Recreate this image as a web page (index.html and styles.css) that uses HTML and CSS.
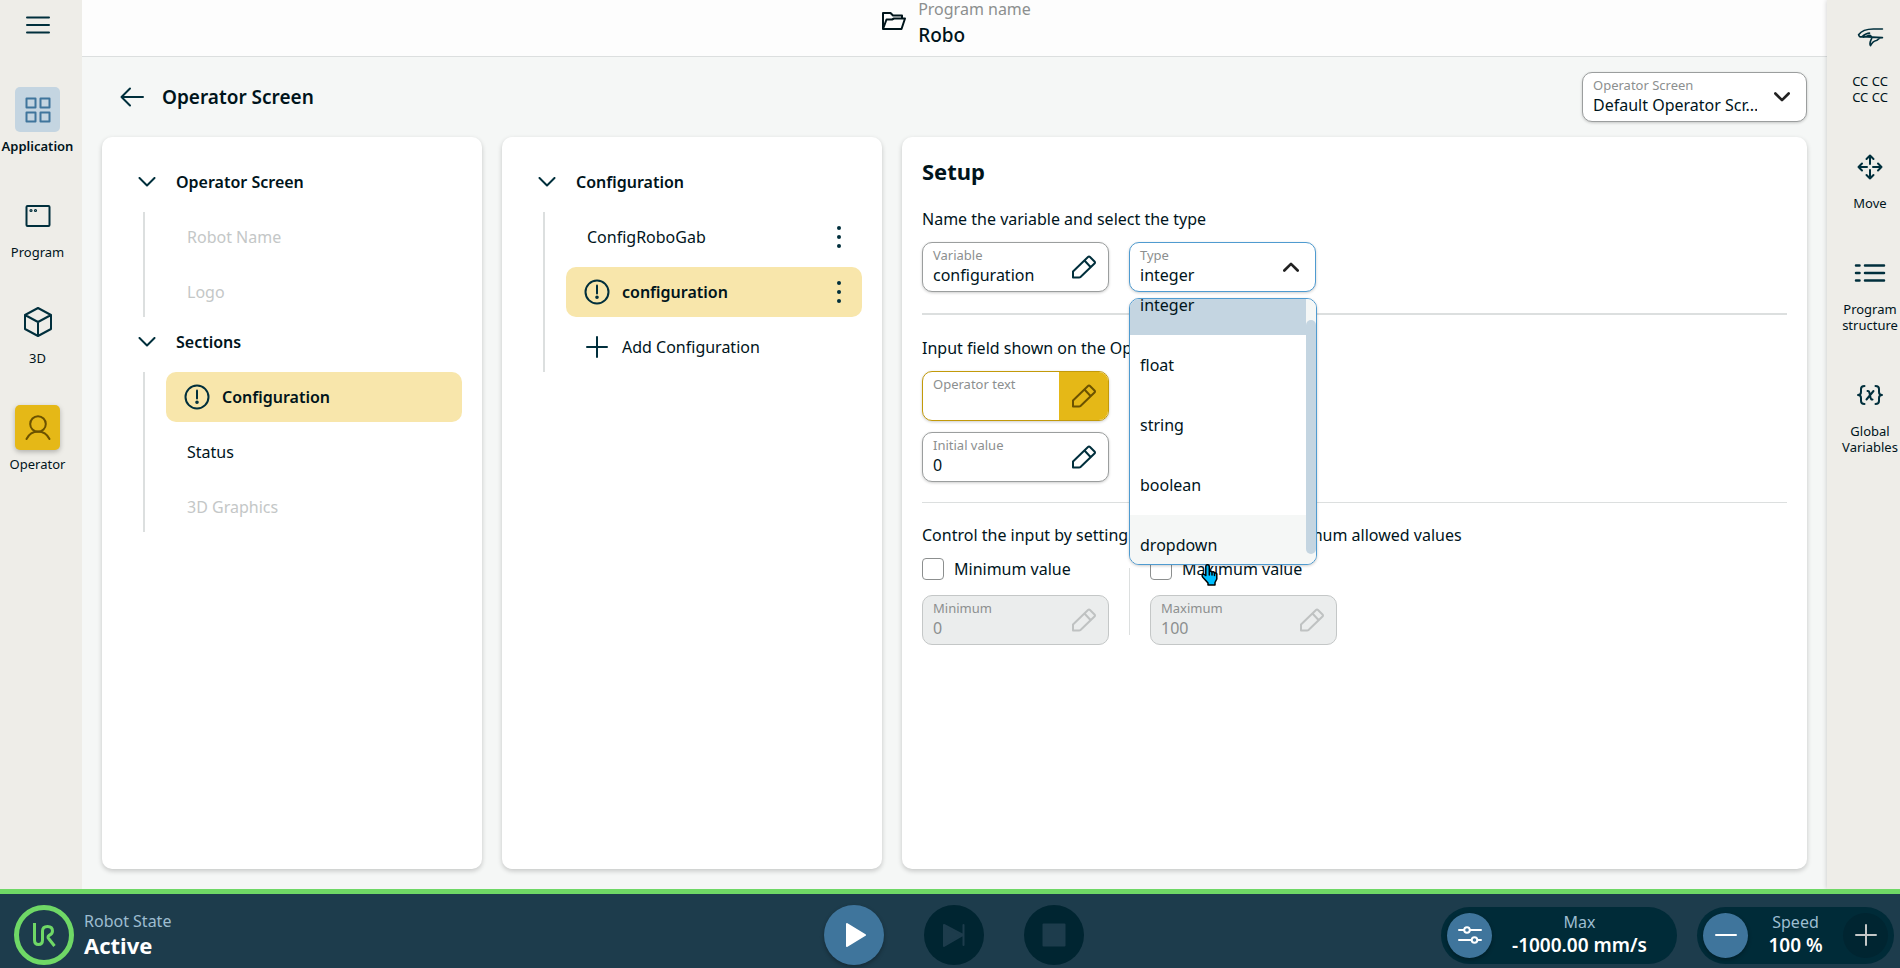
FILE: index.html
```html
<!DOCTYPE html>
<html lang="en">
<head>
  <meta charset="utf-8">
  <title>Operator Screen</title>
  <link rel="stylesheet" href="styles.css">
</head>
<body>
  <!-- shared icons -->
  <svg class="sprite" width="0" height="0">
    <symbol id="pencil" viewBox="0 0 24 24">
      <path d="M1 22.5V16.5L16 2Q17 1 18 2L22.5 6.500Q23.500 7.500 22.500 8.500L8.500 22Q8 22.500 7 22.500ZM12.500 5.500L18.500 12"/>
    </symbol>
    <symbol id="chevron" viewBox="0 0 18 10">
      <path d="M1.500 1L9 8.500L16.500 1"/>
    </symbol>
    <symbol id="alert" viewBox="0 0 26 26">
      <circle cx="13" cy="13" r="11.500"/>
      <path d="M13 6.500V14.500"/>
      <circle cx="13" cy="18.300" r="0.800" fill="currentColor"/>
    </symbol>
    <symbol id="kebab" viewBox="0 0 6 24">
      <g fill="currentColor" stroke="none">
        <circle cx="3" cy="3" r="2"/>
        <circle cx="3" cy="12" r="2"/>
        <circle cx="3" cy="21" r="2"/>
      </g>
    </symbol>
  </svg>

  <div class="screen">
    <nav class="side side-left">
      <button class="menu-btn" aria-label="Menu">
        <svg width="24" height="20" viewBox="0 0 24 20"><path d="M1 2.500H23M1 10H23M1 17.500H23"/></svg>
      </button>
      <a class="side-item active" href="#">
        <span class="side-icon box-blue">
          <svg width="26" height="26" viewBox="0 0 26 26"><path d="M1.500 1.500H10.500V10.500H1.500ZM15.500 1.500H24.500V10.500H15.500ZM1.500 15.500H10.500V24.500H1.500ZM15.500 15.500H24.500V24.500H15.500Z"/></svg>
        </span>
        Application
      </a>
      <a class="side-item" href="#">
        <span class="side-icon">
          <svg width="26" height="24" viewBox="0 0 26 24">
            <rect x="1.500" y="2" width="23" height="20" rx="1"/>
            <circle cx="6" cy="6.500" r="0.600"/>
            <circle cx="10.500" cy="6.500" r="0.600"/>
          </svg>
        </span>
        Program
      </a>
      <a class="side-item" href="#">
        <span class="side-icon">
          <svg width="28" height="30" viewBox="0 0 28 30"><path d="M14 1L27 8V22L14 29L1 22V8ZM1 8L14 15L27 8M14 15V29"/></svg>
        </span>
        3D
      </a>
      <a class="side-item" href="#">
        <span class="side-icon box-yellow">
          <svg width="26" height="26" viewBox="0 0 26 26"><circle cx="13" cy="9" r="7.800"/><path d="M1.500 24C4 19 8 16.500 13 16.500S22 19 24.500 24"/></svg>
        </span>
        Operator
      </a>
    </nav>

    <div class="center">
      <header class="top">
        <svg width="24" height="18" viewBox="0 0 24 18"><path d="M1 17V1H8.500L11 3.500H20V6.500M1 17L4.500 7.500H10L12 6.500H23L19.500 17Z"/></svg>
        <div>
          <p class="top-label">Program name</p>
          <p class="top-name">Robo</p>
        </div>
      </header>

      <div class="title-row">
        <button class="back" aria-label="Back">
          <svg width="24" height="20" viewBox="0 0 24 20"><path d="M23 10H1.500M10 1.500L1.500 10L10 18.500"/></svg>
        </button>
        <h1>Operator Screen</h1>
        <div class="field screen-select">
          <label for="screen">Operator Screen</label>
          <select id="screen">
            <option>Default Operator Scr...</option>
          </select>
          <span class="field-arrow"><svg width="16" height="10"><use href="#chevron"/></svg></span>
        </div>
      </div>

      <main class="panels">
        <section class="panel tree">
          <h2><svg width="18" height="10"><use href="#chevron"/></svg>Operator Screen</h2>
          <ul>
            <li class="row disabled">Robot Name</li>
            <li class="row disabled">Logo</li>
          </ul>
          <h2><svg width="18" height="10"><use href="#chevron"/></svg>Sections</h2>
          <ul>
            <li class="row selected"><svg width="26" height="26"><use href="#alert"/></svg>Configuration</li>
            <li class="row">Status</li>
            <li class="row disabled">3D Graphics</li>
          </ul>
        </section>

        <section class="panel tree">
          <h2><svg width="18" height="10"><use href="#chevron"/></svg>Configuration</h2>
          <ul>
            <li class="row">ConfigRoboGab
              <button class="more" aria-label="More"><svg width="6" height="24"><use href="#kebab"/></svg></button>
            </li>
            <li class="row selected"><svg width="26" height="26"><use href="#alert"/></svg>configuration
              <button class="more" aria-label="More"><svg width="6" height="24"><use href="#kebab"/></svg></button>
            </li>
            <li class="row"><svg width="26" height="26" viewBox="0 0 26 26"><path d="M13 3V23M3 13H23"/></svg>Add Configuration</li>
          </ul>
        </section>

        <section class="panel setup">
          <h2>Setup</h2>
          <p>Name the variable and select the type</p>
          <div class="fields">
            <div class="field">
              <label for="variable">Variable</label>
              <input id="variable" type="text" value="configuration">
              <button class="edit" aria-label="Edit variable"><svg width="24" height="24"><use href="#pencil"/></svg></button>
            </div>
            <div class="dropdown">
              <div class="field open">
                <label for="type">Type</label>
                <select id="type">
                  <option>integer</option>
                </select>
                <span class="field-arrow up"><svg width="16" height="10"><use href="#chevron"/></svg></span>
              </div>
              <div class="list">
                <ul id="options" role="listbox">
                  <li class="current" role="option">integer</li>
                  <li role="option">float</li>
                  <li role="option">string</li>
                  <li role="option">boolean</li>
                  <li class="hover" role="option">dropdown</li>
                </ul>
                <span class="track"><span class="thumb"></span></span>
              </div>
              <svg class="pointer" width="18" height="22" viewBox="0 0 18 22">
                <path d="M6.500 0.800C8 0.800 8.300 1.800 8.300 3V7.500Q9.800 6.500 11 8Q12.600 7.200 13.500 8.800Q15 8.300 15.800 9.800V15L14 18.500V21H7V19L2 13.500Q0.500 11.500 1.500 10.500T4.800 11.500V3C4.800 1.800 5 0.800 6.500 0.800ZM8.300 7.500V11M11 8V11M13.500 8.800V11.500"/>
              </svg>
            </div>
          </div>

          <hr class="thick">
          <p>Input field shown on the Operator Screen</p>
          <div class="field warn">
            <label for="optext">Operator text</label>
            <input id="optext" type="text">
            <button class="edit" aria-label="Edit operator text"><svg width="24" height="24"><use href="#pencil"/></svg></button>
          </div>
          <div class="field second">
            <label for="initial">Initial value</label>
            <input id="initial" type="text" value="0">
            <button class="edit" aria-label="Edit initial value"><svg width="24" height="24"><use href="#pencil"/></svg></button>
          </div>

          <hr>
          <p>Control the input by setting the minimum and maximum allowed values</p>
          <div class="fields">
            <div>
              <label class="check"><input type="checkbox">Minimum value</label>
              <div class="field off">
                <label for="min">Minimum</label>
                <input id="min" type="text" value="0" disabled>
                <button class="edit" aria-label="Edit minimum" disabled><svg width="24" height="24"><use href="#pencil"/></svg></button>
              </div>
            </div>
            <div class="split"></div>
            <div>
              <label class="check"><input type="checkbox">Maximum value</label>
              <div class="field off">
                <label for="max">Maximum</label>
                <input id="max" type="text" value="100" disabled>
                <button class="edit" aria-label="Edit maximum" disabled><svg width="24" height="24"><use href="#pencil"/></svg></button>
              </div>
            </div>
          </div>
        </section>
      </main>
    </div>

    <nav class="side side-right">
      <a class="side-item" href="#">
        <span class="side-icon high">
          <svg width="27" height="20" viewBox="0 0 82 62"><path class="hand" d="M78 6H50C30 6 14 10 4 24C5 30 10 32 15 30C22 24 28 19 38 19M15 30C22 35 28 27 40 26C47 30 45 36 42 41C39 48 38 53 41 58C46 48 50 44 59 42C67 40 63 33 78 33Z"/></svg>
        </span>
        CC CC<br>CC CC
      </a>
      <a class="side-item" href="#">
        <span class="side-icon">
          <svg width="26" height="26" viewBox="0 0 26 26"><path d="M13 10V1.500M9.500 5L13 1.500L16.500 5M13 16V24.500M9.500 21L13 24.500L16.500 21M10 13H1.500M5 9.500L1.500 13L5 16.500M16 13H24.500M21 9.500L24.500 13L21 16.500"/></svg>
        </span>
        Move
      </a>
      <a class="side-item" href="#">
        <span class="side-icon">
          <svg width="32" height="20" viewBox="0 0 32 20"><path class="bold" d="M2 2.500H5.500M11 2.500H30M2 10H5.500M11 10H30M2 17.500H5.500M11 17.500H30"/></svg>
        </span>
        Program<br>structure
      </a>
      <a class="side-item" href="#">
        <span class="side-icon">
          <svg width="26" height="20" viewBox="0 0 26 20"><path d="M7.500 1Q4 1 4 4V7Q4 10 1 10Q4 10 4 13V16Q4 19 7.500 19M18.500 1Q22 1 22 4V7Q22 10 25 10Q22 10 22 13V16Q22 19 18.500 19M10.500 6Q12 5.500 12.500 8L13.500 12.500Q14 15 15.500 14.500M16.500 6L9.500 14.500"/></svg>
        </span>
        Global<br>Variables
      </a>
    </nav>
  </div>

  <footer class="bar">
    <div class="state">
      <span class="ur">
        <svg width="24" height="26" viewBox="0 0 24 26"><path d="M2.500 1V18Q2.500 22.500 6.500 22.500T10.500 18V9Q10.500 4.500 15.500 4.500T20.500 9Q20.500 12 17 13.500Q15 15 17 17L22.500 24"/></svg>
      </span>
      <div class="state-text">
        <p class="bar-label">Robot State</p>
        <p class="bar-big">Active</p>
      </div>
    </div>
    <div class="controls">
      <button class="round play" aria-label="Play"><svg width="24" height="26" viewBox="0 0 24 26"><path d="M5 2L23 13L5 24Z"/></svg></button>
      <button class="round" aria-label="Step" disabled><svg width="24" height="24" viewBox="0 0 24 24"><path d="M2 2L21 12L2 23ZM21.500 2V22"/></svg></button>
      <button class="round" aria-label="Stop" disabled><svg width="24" height="24" viewBox="0 0 24 24"><path d="M1.500 1.500H22.500V22.500H1.500Z"/></svg></button>
    </div>
    <div class="pills">
      <div class="pill max">
        <button class="small" aria-label="Limits"><svg width="24" height="20" viewBox="0 0 24 20"><path d="M1 5H6M12 5H23M1 15H13M20 15H23"/><circle cx="9" cy="5" r="2.800"/><circle cx="16.500" cy="15" r="2.800"/></svg></button>
        <div class="pill-text">
          <p class="bar-label">Max</p>
          <p class="pill-value">-1000.00 mm/s</p>
        </div>
      </div>
      <div class="pill speed">
        <button class="small" aria-label="Slower"><svg width="24" height="24" viewBox="0 0 24 24"><path d="M2 12H22"/></svg></button>
        <div class="pill-text">
          <p class="bar-label">Speed</p>
          <p class="pill-value">100 %</p>
        </div>
        <button class="small" aria-label="Faster" disabled><svg width="24" height="24" viewBox="0 0 24 24"><path d="M2 12H22M12 2V22"/></svg></button>
      </div>
    </div>
  </footer>

  <script>
    document.getElementById('options').scrollTop = 24;
  </script>
</body>
</html>
```
FILE: styles.css
```css
* {
  box-sizing: border-box;
}
body {
  margin: 0;
  height: 100vh;
  display: flex;
  flex-direction: column;
  overflow: hidden;
  font-family: "Noto Sans", sans-serif;
  font-size: 16px;
  line-height: 24px;
  color: #00141b;
}
h1, h2, p, ul {
  margin: 0;
  padding: 0;
}
ul {
  list-style: none;
}
button, input, select {
  font: inherit;
  color: inherit;
  margin: 0;
  padding: 0;
  border: 0;
  background: none;
}
a {
  color: inherit;
  text-decoration: none;
}
svg {
  display: block;
  flex: none;
  fill: none;
  stroke: currentColor;
  stroke-width: 2;
  stroke-linecap: round;
  stroke-linejoin: round;
}
.sprite {
  position: absolute;
}

/* page frame */
.screen {
  flex: 1;
  min-height: 0;
  display: flex;
}
.center {
  flex: 1;
  min-width: 0;
  display: flex;
  flex-direction: column;
  background: #f5f7f6;
}
.side {
  flex: none;
  display: flex;
  flex-direction: column;
  gap: 39px;
  background: #eeede8;
}
.side-left {
  width: 82px;
  padding: 15px 7px 0 0;
}
.side-right {
  width: 73px;
  padding: 22px 0 0 13px;
  box-shadow: 0 0 5px rgba(0, 0, 0, 0.2);
}
.menu-btn {
  align-self: center;
  color: #002f3c;
  margin-bottom: 13px;
}
.side-item {
  display: flex;
  flex-direction: column;
  align-items: center;
  font-size: 13px;
  line-height: 16px;
  text-align: center;
}
.side-item.active {
  font-weight: 600;
}
.side-icon {
  width: 45px;
  height: 45px;
  margin-bottom: 6px;
  display: flex;
  align-items: center;
  justify-content: center;
  border-radius: 5px;
  color: #002f3c;
}
.side-icon.high {
  align-items: flex-start;
  padding-top: 5px;
}
.box-blue {
  background: #c4d5e1;
  color: #3f759c;
}
.box-yellow {
  background: #e5b817;
  color: #6b5200;
  box-shadow: 0 2px 5px rgba(0, 0, 0, 0.25);
}
.hand {
  stroke-width: 5;
}
.bold {
  stroke-width: 2.5;
}

/* header */
.top {
  height: 57px;
  flex: none;
  display: flex;
  justify-content: center;
  gap: 12px;
  padding-left: 4px;
  background: #fdfdfd;
  border-bottom: 1px solid #dcdfdf;
}
.top svg {
  margin-top: 12px;
}
.top-label {
  margin-top: -3px;
  color: #8c8f8f;
}
.top-name {
  font-size: 19px;
  font-weight: 500;
  line-height: 28px;
}
.title-row {
  height: 80px;
  flex: none;
  display: flex;
  align-items: center;
  padding: 0 20px;
}
.back {
  margin: 0 18px;
  color: #002f3c;
}
h1 {
  font-size: 19px;
  font-weight: 600;
}

/* panels */
.panels {
  flex: 1;
  min-height: 0;
  display: grid;
  grid-template-columns: 380px 380px 1fr;
  gap: 20px;
  padding: 0 20px 20px;
}
.panel {
  padding: 20px;
  background: #fff;
  border-radius: 10px;
  box-shadow: 0 2px 5px rgba(0, 0, 0, 0.2);
}
.tree h2 {
  display: flex;
  align-items: center;
  gap: 20px;
  height: 50px;
  padding-left: 16px;
  font-size: 16px;
  font-weight: 600;
}
.tree svg {
  color: #002f3c;
}
.tree ul {
  display: flex;
  flex-direction: column;
  gap: 5px;
  margin: 5px 0 0 21px;
  padding-left: 21px;
  border-left: 2px solid #dcdfdf;
}
.row {
  display: flex;
  align-items: center;
  gap: 12px;
  height: 50px;
  padding: 0 20px 0 21px;
  border-radius: 10px;
}
.row > svg {
  margin-left: -3px;
}
.row.disabled {
  color: #c4c7c7;
}
.row.selected {
  background: #f8e6ab;
  font-weight: 600;
}
.more {
  margin-left: auto;
  color: #002f3c;
}

/* setup form */
.setup h2 {
  margin-bottom: 22px;
  font-size: 22px;
  line-height: 28px;
}
.setup p {
  margin-bottom: 11px;
}
.fields {
  display: flex;
  gap: 20px;
}
.field {
  display: grid;
  grid-template-columns: 1fr 49px;
  grid-template-rows: 18px 20px;
  width: 187px;
  height: 50px;
  padding-top: 4px;
  border: 1px solid #9b9e9e;
  border-radius: 10px;
  background: #fff;
  box-shadow: 0 1px 3px rgba(0, 0, 0, 0.2);
}
.field label {
  padding-left: 10px;
  font-size: 13px;
  line-height: 17px;
  color: #8c8f8f;
}
.field input,
.field select {
  grid-row: 2;
  grid-column: 1;
  min-width: 0;
  width: 100%;
  padding-left: 10px;
  line-height: 20px;
  appearance: none;
  outline: none;
}
.screen-select {
  width: 225px;
  margin-left: auto;
}
.edit,
.field-arrow {
  grid-column: 2;
  grid-row: 1 / 3;
  margin-top: -4px;
  height: 48px;
  display: flex;
  align-items: center;
  justify-content: center;
  color: #002f3c;
}
.field-arrow {
  color: #222;
}
.field-arrow svg {
  stroke-width: 3;
}
.up svg {
  transform: rotate(180deg);
}
.field.open {
  border-color: #4f9bd0;
}
.field.warn {
  border-color: #c29a0a;
}
.warn .edit {
  background: #e5b817;
  color: #6b5200;
  border-radius: 0 9px 9px 0;
}
.field.second {
  margin-top: 11px;
}
.field.off {
  margin-top: 15px;
  background: #ebeded;
  border-color: #c4c7c7;
  box-shadow: none;
}
.off input {
  color: #8c8f8f;
}
.off .edit {
  color: #bfc2c2;
}
hr {
  margin: 20px 0;
  border: 0;
  border-top: 1px solid #dcdfdf;
}
hr.thick {
  margin: 21px 0;
  border-top-width: 2px;
}
.split {
  width: 1px;
  margin: 10px 0;
  background: #dcdfdf;
}
.check {
  display: flex;
  align-items: center;
  gap: 10px;
  height: 22px;
}
.check input {
  width: 22px;
  height: 22px;
  appearance: none;
  background: #fff;
  border: 1px solid #8c8f8f;
  border-radius: 4px;
}

/* open type list */
.dropdown {
  position: relative;
}
.list {
  position: absolute;
  z-index: 1;
  top: 56px;
  left: 0;
  display: flex;
  width: 188px;
  height: 267px;
  overflow: hidden;
  border: 1px solid #4f9bd0;
  border-radius: 10px;
  background: #fff;
  box-shadow: 0 1px 3px rgba(0, 0, 0, 0.2);
}
.list ul {
  flex: 1;
  overflow-y: scroll;
  scrollbar-width: none;
}
.list li {
  height: 60px;
  padding: 0 10px;
  line-height: 60px;
}
.list .current {
  background: #c4d5e1;
}
.list .hover {
  background: #f5f7f6;
}
.track {
  width: 10px;
  padding-top: 21px;
  background: #f5f7f6;
}
.thumb {
  display: block;
  height: 234px;
  border-radius: 5px;
  background: #c4d5e1;
}
.pointer {
  position: absolute;
  z-index: 2;
  top: 322px;
  left: 72px;
}
.pointer path {
  fill: #00bfff;
  stroke: #000;
  stroke-width: 1.5;
}

/* bottom bar */
.bar {
  flex: none;
  display: grid;
  grid-template-columns: 1fr auto 1fr;
  align-items: center;
  height: 79px;
  padding: 8px 6px 0 14px;
  border-top: 5px solid #6fd866;
  background: #1d3c4c;
  color: #fff;
}
.state {
  display: flex;
  align-items: center;
  gap: 10px;
}
.state-text {
  padding-bottom: 5px;
}
.ur {
  display: flex;
  align-items: center;
  justify-content: center;
  width: 60px;
  height: 60px;
  border: 5px solid #6fd866;
  border-radius: 50%;
  color: #6fd866;
}
.ur svg {
  stroke-width: 3;
  stroke-linecap: butt;
}
.bar-label {
  color: #9dbdd0;
}
.bar-big {
  font-size: 22px;
  font-weight: 700;
}
.controls {
  display: flex;
  gap: 40px;
}
.round {
  display: flex;
  align-items: center;
  justify-content: center;
  width: 60px;
  height: 60px;
  border-radius: 50%;
  background: #002531;
  color: #1d3c4c;
}
.round svg {
  fill: currentColor;
}
.play {
  background: #3f759c;
  color: #fff;
  box-shadow: 0 2px 4px rgba(0, 0, 0, 0.3);
}
.pills {
  display: flex;
  justify-content: flex-end;
  gap: 20px;
}
.pill {
  display: flex;
  align-items: center;
  height: 57px;
  padding: 6px;
  border-radius: 29px;
  background: #002b38;
}
.pill.max {
  width: 236px;
}
.pill.speed {
  width: 197px;
}
.pill-text {
  flex: 1;
  padding-bottom: 2px;
  text-align: center;
}
.max .pill-text {
  padding-right: 4px;
}
.pill-text p {
  line-height: 23px;
}
.pill-value {
  font-size: 19px;
  font-weight: 600;
}
.small {
  display: flex;
  align-items: center;
  justify-content: center;
  width: 45px;
  height: 45px;
  border-radius: 50%;
  background: #3f759c;
  box-shadow: 0 2px 4px rgba(0, 0, 0, 0.3);
}
.small:disabled {
  background: #002531;
  color: #c4c7c7;
  box-shadow: none;
}
```
